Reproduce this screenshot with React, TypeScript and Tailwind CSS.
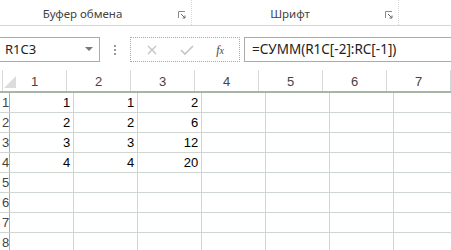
const cols = [1, 2, 3, 4, 5, 6, 7];
const data: Record<number, (number | null)[]> = {
  1: [1, 1, 2],
  2: [2, 2, 6],
  3: [3, 3, 12],
  4: [4, 4, 20],
};
const rows = [1, 2, 3, 4, 5, 6, 7, 8];

function Launcher() {
  return (
    <svg width="8" height="8" viewBox="0 0 8 8" className="mb-[2px]">
      <path d="M0.5 7V0.5H7" stroke="#8a8a8a" fill="none" />
      <path d="M3 3L7 7M4.5 7H7V4.5" stroke="#6a6a6a" fill="none" />
    </svg>
  );
}

export default function App() {
  return (
    <div className="w-[451px] h-[250px] overflow-hidden bg-white" style={{ fontFamily: '"Noto Sans", sans-serif' }}>
      {/* ribbon group labels */}
      <div className="flex h-[26px] border-b border-[#d5d5d5]">
        <div className="relative flex w-[192px] items-end border-r border-dotted border-[#d8d8d8] pb-[3px]">
          <span className="w-full text-center text-[11.5px] text-[#444] pr-[26px]">Буфер обмена</span>
          <div className="absolute right-[5px] bottom-[4px]"><Launcher /></div>
        </div>
        <div className="relative flex w-[207px] items-end border-r border-dotted border-[#d8d8d8] pb-[3px]">
          <span className="w-full text-center text-[11.5px] text-[#444] pr-[10px]">Шрифт</span>
          <div className="absolute right-[5px] bottom-[4px]"><Launcher /></div>
        </div>
      </div>

      {/* formula bar */}
      <div className="mt-[11px] flex h-[25px]">
        <div className="flex w-[100px] items-center justify-between border border-l-0 border-[#ababab] pl-[5px] pr-[6px]">
          <span className="text-[13px] text-[#222]">R1C3</span>
          <svg width="8" height="5" viewBox="0 0 8 5"><path d="M0 0H8L4 4Z" fill="#777" /></svg>
        </div>
        <div className="flex w-[30px] flex-col items-center justify-center gap-[2px]">
          <span className="h-[2px] w-[2px] bg-[#999]" />
          <span className="h-[2px] w-[2px] bg-[#999]" />
          <span className="h-[2px] w-[2px] bg-[#999]" />
        </div>
        <div className="flex w-[110px] items-center justify-around border border-dotted border-[#aaa] px-[4px]">
          <svg width="12" height="12" viewBox="0 0 12 12"><path d="M2 2L10 10M10 2L2 10" stroke="#c4c4c4" strokeWidth="1.4" /></svg>
          <svg width="14" height="12" viewBox="0 0 14 12"><path d="M1 6L5 10L13 2" stroke="#c4c4c4" strokeWidth="1.6" fill="none" /></svg>
          <span className="text-[12px] italic text-[#444]" style={{ fontFamily: '"Liberation Serif", serif' }}>f<span className="text-[10px]">x</span></span>
        </div>
        <div className="ml-[4px] flex flex-1 items-center border border-r-0 border-[#ababab] pl-[7px]">
          <span className="text-[13.5px] text-[#222]">=СУММ(R1C[-2]:RC[-1])</span>
        </div>
      </div>

      {/* sheet */}
      <div className="mt-[8px]" style={{ fontFamily: '"Liberation Sans", sans-serif' }}>
        <div className="flex h-[23px] border-b-2 border-[#a6b5a6]">
          <div className="relative w-[19px] border-r border-[#d8d8d8]">
            <svg width="12" height="12" viewBox="0 0 12 12" className="absolute left-[4px] bottom-[3px]"><path d="M12 0V12H0Z" fill="#dcdcdc" /></svg>
          </div>
          {cols.map((c) => (
            <div key={c} className="flex w-[64px] shrink-0 items-center justify-center border-r border-[#d8d8d8] pt-[3px] text-[13px] text-[#444]">
              {c}
            </div>
          ))}
        </div>
        {rows.map((r) => (
          <div key={r} className="flex h-[20px] border-b border-[#cfd6cf]">
            <div className="flex w-[19px] items-center border-r border-[#a6b5a6] pl-[2px] text-[13px] text-[#444]">{r}</div>
            {cols.map((c, i) => (
              <div key={c} className="flex w-[64px] shrink-0 items-center justify-end border-r border-[#cfd6cf] pr-[3px] text-[13px] text-black">
                {data[r]?.[i] ?? ""}
              </div>
            ))}
          </div>
        ))}
      </div>
    </div>
  );
}
